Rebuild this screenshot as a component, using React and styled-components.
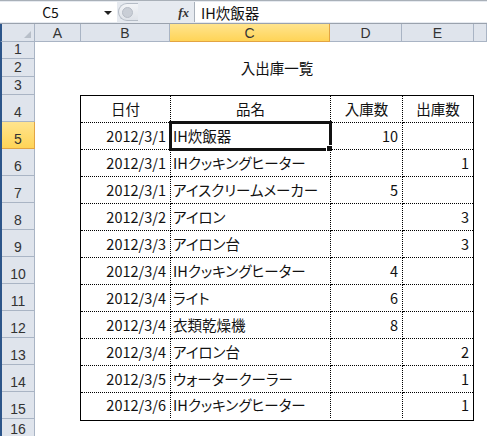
import React from "react";
import styled, { createGlobalStyle, css } from "styled-components";

const Global = createGlobalStyle`
  html, body { margin: 0; padding: 0; background: #fff; }
  body { font-family: "Noto Sans CJK JP", "Liberation Sans", sans-serif; }
  * { box-sizing: border-box; }
`;

const FONT = `"Noto Sans CJK JP", "Liberation Sans", sans-serif`;

const Window = styled.div`
  width: 487px;
  height: 436px;
  overflow: hidden;
  display: flex;
  flex-direction: column;
  background: #fff;
  font-family: ${FONT};
`;

const FormulaBar = styled.div`
  height: 24px;
  display: flex;
  align-items: stretch;
  background: #e6eaf0;
  border-top: 1px solid #a9b0b8;
  border-bottom: 1px solid #9aa2ad;
  padding-top: 1px;
`;

const NameBox = styled.div`
  width: 117px;
  background: #fff;
  position: relative;
  display: flex;
  align-items: center;
  justify-content: center;
  font-size: 14px;
  color: #111;
  padding-right: 16px;
  margin-bottom: 1px;
`;

const DropArrow = styled.span`
  position: absolute;
  right: 5px;
  top: 9px;
  width: 0;
  height: 0;
  border-left: 4px solid transparent;
  border-right: 4px solid transparent;
  border-top: 4px solid #222;
`;

const Pill = styled.div`
  width: 20px;
  margin: 1px 0 2px 1px;
  border: 1px solid #b5bcc6;
  border-right: none;
  border-radius: 10px 0 0 10px;
  background: linear-gradient(#f2f4f7, #dfe3e9);
  display: flex;
  align-items: center;
  padding-left: 3px;
`;

const PillDot = styled.span`
  width: 11px;
  height: 11px;
  border-radius: 50%;
  background: #c9ced6;
  border: 1px solid #b7bdc6;
`;

const FxArea = styled.div`
  width: 56px;
  display: flex;
  align-items: center;
  justify-content: flex-end;
  padding-right: 5px;
  font-family: "Liberation Serif", "DejaVu Serif", serif;
  font-style: italic;
  font-weight: bold;
  font-size: 13px;
  color: #333;
`;

const FormulaInput = styled.div`
  flex: 1;
  background: #fff;
  border-left: 1px solid #a8b0ba;
  display: flex;
  align-items: center;
  padding-left: 6px;
  font-size: 14.5px;
  color: #111;
  margin-bottom: 1px;
`;

const Band = styled.div`
  height: 2px;
  background: #f1f3f6;
`;

const ColHeaderRow = styled.div`
  height: 20px;
  display: flex;
  box-shadow: inset 2px 0 #2c558a;
`;

const Corner = styled.div`
  width: 35px;
  position: relative;
  background: #dfe4ec;
  border-right: 1px solid #a9b4c4;
  border-bottom: 1px solid #a9b4c4;
  border-left: 2px solid #2c558a;
  &::after {
    content: "";
    position: absolute;
    right: 3px;
    bottom: 3px;
    border-left: 7px solid transparent;
    border-bottom: 7px solid #b8bfc9;
  }
`;

const headerBg = css`
  background: ${(p) =>
    p.$active ? "linear-gradient(#ffe48e, #ffd457)" : "#dfe4ec"};
`;

const ColHeader = styled.div`
  width: ${(p) => p.$w}px;
  flex: ${(p) => (p.$grow ? 1 : "none")};
  ${headerBg};
  border-right: 1px solid ${(p) => (p.$active ? "#e2a443" : "#a9b4c4")};
  border-bottom: 1px solid ${(p) => (p.$active ? "#e2a443" : "#a9b4c4")};
  display: flex;
  align-items: center;
  justify-content: center;
  font-family: "Liberation Sans", sans-serif;
  font-size: 14px;
  color: #333;
  padding-top: 1px;
`;

const SheetArea = styled.div`
  display: flex;
  flex: 1;
`;

const RowHeaders = styled.div`
  width: 35px;
  display: flex;
  flex-direction: column;
  border-left: 2px solid #2c558a;
`;

const RowHeader = styled.div`
  height: ${(p) => p.$h}px;
  flex: none;
  ${headerBg};
  border-right: 1px solid ${(p) => (p.$active ? "#e2a443" : "#a9b4c4")};
  border-bottom: 1px solid ${(p) => (p.$active ? "#e2a443" : "#a9b4c4")};
  display: flex;
  align-items: flex-end;
  justify-content: center;
  font-family: "Liberation Sans", sans-serif;
  font-size: 14px;
  line-height: 16px;
  color: #333;
  padding-bottom: 1px;
`;

const SheetBody = styled.div`
  flex: 1;
  display: flex;
  flex-direction: column;
`;

const Spacer = styled.div`
  height: ${(p) => p.$h}px;
  flex: none;
`;

const TitleRow = styled.div`
  height: 18px;
  flex: none;
  margin-left: 45px;
  width: 394px;
  display: flex;
  align-items: flex-end;
  justify-content: center;
  font-size: 14.5px;
  line-height: 18px;
  color: #111;
`;

const Table = styled.div`
  margin-left: 45px;
  width: 394px;
  border: 1px solid #000;
  display: grid;
  grid-template-columns: 90px 160px 72px 70px;
  grid-auto-rows: 27px;
  & > *:nth-child(4n) { border-right: none; }
  & > *:nth-last-child(-n + 4) { border-bottom: none; height: 25px; }
`;

const Cell = styled.div`
  position: relative;
  border-right: 1px dotted #000;
  border-bottom: 1px dotted #000;
  display: flex;
  align-items: center;
  justify-content: ${(p) =>
    p.$align === "right" ? "flex-end" : p.$align === "center" ? "center" : "flex-start"};
  padding: ${(p) => (p.$align === "left" ? "0 0 0 2px" : p.$align === "right" ? "0 4px 0 0" : "0")};
  font-size: 14.5px;
  font-feature-settings: ${(p) => (p.$palt ? '"palt"' : "normal")};
  color: #111;
  white-space: nowrap;
  line-height: 1;
`;

const ActiveFrame = styled.div`
  position: absolute;
  left: -2px;
  top: -2px;
  right: -2px;
  bottom: -2px;
  border: 3px solid #111;
  pointer-events: none;
  &::after {
    content: "";
    position: absolute;
    right: -4px;
    bottom: -4px;
    width: 5px;
    height: 5px;
    background: #111;
    border: 1px solid #fff;
  }
`;

const rows = [
  ["2012/3/1", "IH炊飯器", "10", ""],
  ["2012/3/1", "IHクッキングヒーター", "", "1"],
  ["2012/3/1", "アイスクリームメーカー", "5", ""],
  ["2012/3/2", "アイロン", "", "3"],
  ["2012/3/3", "アイロン台", "", "3"],
  ["2012/3/4", "IHクッキングヒーター", "4", ""],
  ["2012/3/4", "ライト", "6", ""],
  ["2012/3/4", "衣類乾燥機", "8", ""],
  ["2012/3/4", "アイロン台", "", "2"],
  ["2012/3/5", "ウォータークーラー", "", "1"],
  ["2012/3/6", "IHクッキングヒーター", "", "1"],
];

const colHeaders = [
  ["A", 46],
  ["B", 89],
  ["C", 160, true],
  ["D", 72],
  ["E", 72],
];

const rowHeights = [17, 18, 18, 27, 27, 27, 27, 27, 27, 27, 27, 27, 27, 27, 27, 20];

export default function App() {
  return (
    <>
      <Global />
      <Window>
        <FormulaBar>
          <NameBox>
            C5
            <DropArrow />
          </NameBox>
          <Pill>
            <PillDot />
          </Pill>
          <FxArea>fx</FxArea>
          <FormulaInput>IH炊飯器</FormulaInput>
        </FormulaBar>
        <Band />
        <ColHeaderRow>
          <Corner />
          {colHeaders.map(([l, w, a]) => (
            <ColHeader key={l} $w={w} $active={a}>
              {l}
            </ColHeader>
          ))}
          <ColHeader $grow />
        </ColHeaderRow>
        <SheetArea>
          <RowHeaders>
            {rowHeights.map((h, i) => (
              <RowHeader key={i} $h={h} $active={i === 4}>
                {i + 1}
              </RowHeader>
            ))}
          </RowHeaders>
          <SheetBody>
            <Spacer $h={17} />
            <TitleRow>入出庫一覧</TitleRow>
            <Spacer $h={18} />
            <Table>
              <Cell $align="center">日付</Cell>
              <Cell $align="center">品名</Cell>
              <Cell $align="center">入庫数</Cell>
              <Cell $align="center">出庫数</Cell>
              {rows.map((r, i) => (
                <React.Fragment key={i}>
                  <Cell $align="right">{r[0]}</Cell>
                  <Cell $align="left" $palt>
                    {r[1]}
                    {i === 0 && <ActiveFrame />}
                  </Cell>
                  <Cell $align="right">{r[2]}</Cell>
                  <Cell $align="right">{r[3]}</Cell>
                </React.Fragment>
              ))}
            </Table>
          </SheetBody>
        </SheetArea>
      </Window>
    </>
  );
}
